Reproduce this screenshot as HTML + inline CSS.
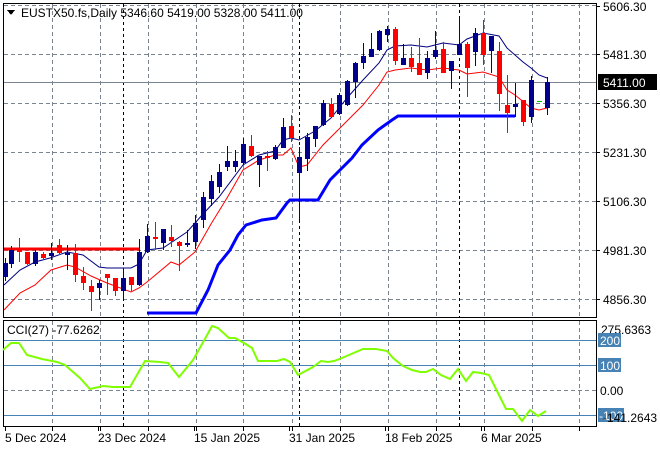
<!DOCTYPE html>
<html><head><meta charset="utf-8"><style>
html,body{margin:0;padding:0;background:#fff;width:660px;height:450px;overflow:hidden}
svg text{font-family:"Liberation Sans","DejaVu Sans",sans-serif;font-size:12px;fill:#000}
</style></head><body>
<svg id="s" width="660" height="450" xmlns="http://www.w3.org/2000/svg" shape-rendering="crispEdges">
<g id="grid" stroke="#7a8490" stroke-dasharray="4,3" stroke-width="1"></g>
<g id="blk" stroke="#000" stroke-dasharray="3,3" stroke-width="1"></g>
<line x1="4" y1="82.5" x2="596" y2="82.5" stroke="#7a8490"/>
<polyline fill="none" stroke="#ff0000" stroke-width="3" points="4,249 139,249"/>
<polyline fill="none" stroke="#0000ff" stroke-width="3" shape-rendering="auto" points="147,313 196,313 208,290 218,265 230,250 238,235 246,225 262,220 276,218 287,203 290,200 318,200 330,180 340,170 352,158 362,145 378,130 392,120 398,116 515,116"/>
<polyline fill="none" stroke="#000080" stroke-width="1" shape-rendering="auto" points="4,285 20,270 35,262 50,258 67,252 83,255 99,267 107,268 131,268 139,264 147,250 163,248 187,232 203,214 219,197 243,165 259,155 275,151 283,140 291,138 299,140 315,131 331,118 347,98 363,80 379,63 387,50 395,46 411,45 427,47 443,43 459,45 467,39 483,33 499,36 507,48 515,55 523,62 531,68 539,75 547,78"/>
<polyline fill="none" stroke="#ff0000" stroke-width="1" shape-rendering="auto" points="4,310 20,293 35,285 51,270 67,265 75,267 91,276 107,283 131,292 139,288 147,282 171,262 179,265 195,252 211,224 227,198 243,170 259,160 275,155 283,155 291,148 299,167 307,165 323,145 347,121 363,105 379,85 387,72 395,70 411,68 427,70 443,68 459,70 467,74 483,72 499,77 507,90 515,95 531,108 539,110 547,108"/>
<g id="candles"></g>
<line x1="537" y1="101.5" x2="542" y2="101.5" stroke="#00c000"/>
<!-- frames -->
<rect x="3.5" y="3.5" width="593" height="314" fill="none" stroke="#000"/>
<rect x="3.5" y="320.5" width="593" height="106" fill="none" stroke="#000"/>
<!-- CCI -->
<g stroke="#4682b4"><line x1="4" y1="340.5" x2="596" y2="340.5"/><line x1="4" y1="365.5" x2="596" y2="365.5"/><line x1="4" y1="415.5" x2="596" y2="415.5"/></g>
<line x1="4" y1="390.5" x2="596" y2="390.5" stroke="#7a8490" stroke-dasharray="4,3"/>
<polyline fill="none" stroke="#7fff00" stroke-width="2" shape-rendering="auto" points="3,350 11,343 19,343 27,355 42,359 57,362 65,365 80,378 90,389 103,386 113,387 130,387 145,361 160,362 168,363 179,377 193,360 206,337 212,326 218,328 229,338 235,338 244,343 252,348 258,361 277,361 284,359 290,362 298,375 313,367 321,361 328,362 334,361 342,358 363,349 376,349 387,351 393,358 403,366 412,370 420,372 426,372 433,369 441,375 450,379 458,369 466,381 473,372 481,373 489,375 498,393 506,409 513,409 522,421 530,410 538,416 546,411"/>
<!-- header -->
<path d="M7,10 L15,10 L11,15 Z" fill="#000"/>
<text x="21" y="17">EUSTX50.fs,Daily  5346.60 5419.00 5328.00 5411.00</text>
<text x="7" y="334">CCI(27) -77.6262</text>
<!-- price axis -->
<g id="ticks" stroke="#000"></g>
<text x="603" y="11">5606.30</text>
<text x="603" y="59">5481.30</text>
<rect x="598" y="74" width="59" height="16" fill="#000"/>
<text x="603" y="87" style="fill:#fff">5411.00</text>
<text x="603" y="108">5356.30</text>
<text x="603" y="157">5231.30</text>
<text x="603" y="206">5106.30</text>
<text x="603" y="255">4981.30</text>
<text x="603" y="304">4856.30</text>
<text x="601" y="334">275.6363</text>
<rect x="598" y="333" width="23" height="14" fill="#4682b4"/><text x="600" y="345" style="fill:#fff">200</text>
<rect x="598" y="358" width="23" height="14" fill="#4682b4"/><text x="600" y="370" style="fill:#fff">100</text>
<text x="600" y="395">0.00</text>
<rect x="598" y="408" width="26" height="14" fill="#4682b4"/><text x="599" y="420" style="fill:#fff">-100</text>
<text x="603" y="422">-141.2643</text>
<!-- dates -->
<text x="5" y="442">5 Dec 2024</text>
<text x="98" y="442">23 Dec 2024</text>
<text x="194" y="442">15 Jan 2025</text>
<text x="289" y="442">31 Jan 2025</text>
<text x="385" y="442">18 Feb 2025</text>
<text x="481" y="442">6 Mar 2025</text>
</svg>
<script>
var NS="http://www.w3.org/2000/svg";
function el(p,t,a){var e=document.createElementNS(NS,t);for(var k in a)e.setAttribute(k,a[k]);p.appendChild(e);return e;}
var g=document.getElementById('grid'),b=document.getElementById('blk');
[52,100,148,196,243,292,340,388,436,484,532,579].forEach(function(x){el(g,'line',{x1:x+.5,y1:4,x2:x+.5,y2:317});el(g,'line',{x1:x+.5,y1:321,x2:x+.5,y2:426});});
[5,54,103,152,201,250,299].forEach(function(y){el(g,'line',{x1:4,y1:y+.5,x2:596,y2:y+.5});});
[123,299,459].forEach(function(x){el(b,'line',{x1:x+.5,y1:4,x2:x+.5,y2:317});el(b,'line',{x1:x+.5,y1:321,x2:x+.5,y2:426});});
var tk=document.getElementById('ticks');
[6,54,103,152,201,250,299].forEach(function(y){el(tk,'line',{x1:596,y1:y+.5,x2:600,y2:y+.5});});
[52,100,148,196,243,292,340,388,436,484,532,579,5,98,194,289,385,481].forEach(function(x){el(tk,'line',{x1:x+.5,y1:427,x2:x+.5,y2:431});});
var B='#00008b',R='#ff0000';
var C=[[5,263,277,258,281,B],[11,250,264,246,268,B],[19,250,252,238,262,R],[27,252,264,252,265,R],[35,252,264,250,266,B],[43,254,258,252,260,R],[51,253,256,243,260,B],[59,245,253,239,255,R],[67,253,255,245,270,B],[75,253,275,244,282,R],[83,276,283,267,290,R],[91,286,292,280,311,R],[99,283,288,280,300,B],[107,274,278,274,295,R],[115,278,291,278,296,R],[123,278,291,268,300,B],[131,277,285,278,291,R],[139,252,285,239,286,B],[147,236,252,224,253,B],[155,237,239,222,250,R],[163,229,243,229,250,B],[171,237,241,225,247,R],[179,242,246,241,271,R],[187,243,245,230,247,B],[195,223,242,215,249,B],[203,197,220,192,228,B],[211,181,199,175,206,B],[219,172,187,164,193,B],[227,161,167,146,171,B],[235,161,167,150,172,B],[243,144,163,138,165,B],[251,146,156,135,157,R],[259,156,165,156,187,B],[267,156,158,151,171,R],[275,147,159,145,160,B],[283,127,148,118,148,B],[291,126,138,115,142,R],[299,157,173,147,220,B],[307,137,159,133,171,B],[315,126,139,126,147,B],[323,103,125,100,126,B],[331,104,117,98,117,R],[339,95,114,93,115,B],[347,81,105,80,106,B],[355,63,82,62,98,B],[363,56,63,43,69,B],[371,49,57,33,57,B],[379,31,50,30,51,B],[387,29,35,26,42,B],[395,29,61,27,65,R],[403,58,65,44,65,B],[411,58,67,47,72,R],[419,63,75,38,75,R],[427,58,73,51,79,B],[435,50,57,31,59,B],[443,49,73,42,73,R],[451,61,71,61,89,B],[459,44,55,17,55,B],[467,44,68,42,97,R],[475,33,52,28,66,B],[483,33,55,20,65,R],[491,36,51,36,73,B],[499,51,94,42,111,R],[507,105,113,75,133,R],[515,104,107,83,117,B],[523,100,122,100,126,R],[531,80,117,76,123,B],[547,82,108,77,115,B]];
var cg=document.getElementById('candles');
C.forEach(function(c){var x=c[0];el(cg,'line',{x1:x+.5,y1:c[3],x2:x+.5,y2:c[4],stroke:c[5]});el(cg,'rect',{x:x-2,y:c[1],width:5,height:Math.max(1,c[2]-c[1]),fill:c[5]});});
</script>
</body></html>
